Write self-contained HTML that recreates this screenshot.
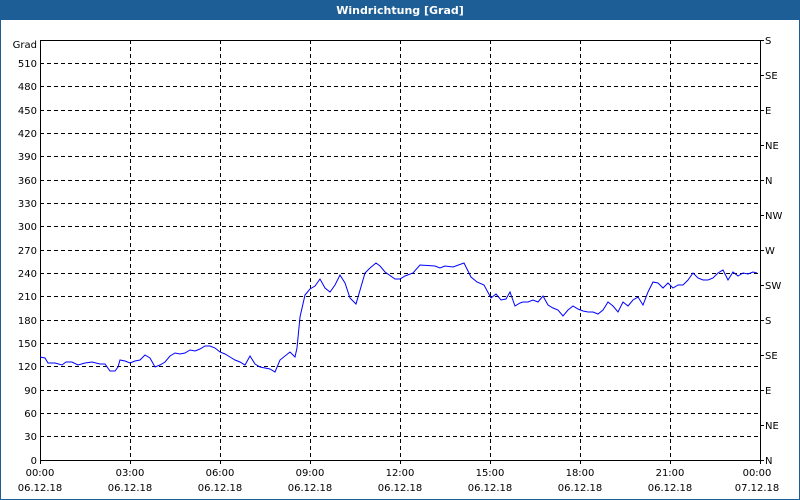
<!DOCTYPE html>
<html><head><style>
body{margin:0;width:800px;height:500px;overflow:hidden;background:#fff;font-family:"DejaVu Sans","Liberation Sans",sans-serif}
</style></head><body>
<svg width="800" height="500" xmlns="http://www.w3.org/2000/svg" style="display:block">
<rect x="0" y="0" width="800" height="500" fill="#fff"/>
<rect x="0" y="0" width="800" height="20" fill="#1d5e96"/>
<rect x="0.5" y="0.5" width="799" height="499" fill="none" stroke="#1d5e96"/>
<text x="400" y="14" fill="#fff" font-size="11" font-weight="bold" text-anchor="middle" font-family="DejaVu Sans, Liberation Sans, sans-serif">Windrichtung [Grad]</text>
<g stroke="#000" stroke-dasharray="4,3" stroke-width="1">
<line x1="40" y1="63.5" x2="760" y2="63.5"/><line x1="40" y1="86.5" x2="760" y2="86.5"/><line x1="40" y1="110.5" x2="760" y2="110.5"/><line x1="40" y1="133.5" x2="760" y2="133.5"/><line x1="40" y1="156.5" x2="760" y2="156.5"/><line x1="40" y1="180.5" x2="760" y2="180.5"/><line x1="40" y1="203.5" x2="760" y2="203.5"/><line x1="40" y1="226.5" x2="760" y2="226.5"/><line x1="40" y1="250.5" x2="760" y2="250.5"/><line x1="40" y1="273.5" x2="760" y2="273.5"/><line x1="40" y1="296.5" x2="760" y2="296.5"/><line x1="40" y1="320.5" x2="760" y2="320.5"/><line x1="40" y1="343.5" x2="760" y2="343.5"/><line x1="40" y1="366.5" x2="760" y2="366.5"/><line x1="40" y1="390.5" x2="760" y2="390.5"/><line x1="40" y1="413.5" x2="760" y2="413.5"/><line x1="40" y1="436.5" x2="760" y2="436.5"/>
<line x1="130.5" y1="40" x2="130.5" y2="460"/><line x1="220.5" y1="40" x2="220.5" y2="460"/><line x1="310.5" y1="40" x2="310.5" y2="460"/><line x1="400.5" y1="40" x2="400.5" y2="460"/><line x1="490.5" y1="40" x2="490.5" y2="460"/><line x1="580.5" y1="40" x2="580.5" y2="460"/><line x1="670.5" y1="40" x2="670.5" y2="460"/>
</g>
<rect x="40.5" y="40.5" width="720" height="420" fill="none" stroke="#000"/>
<g stroke="#000">
<line x1="130.5" y1="460" x2="130.5" y2="464"/><line x1="220.5" y1="460" x2="220.5" y2="464"/><line x1="310.5" y1="460" x2="310.5" y2="464"/><line x1="400.5" y1="460" x2="400.5" y2="464"/><line x1="490.5" y1="460" x2="490.5" y2="464"/><line x1="580.5" y1="460" x2="580.5" y2="464"/><line x1="670.5" y1="460" x2="670.5" y2="464"/><line x1="760.5" y1="460" x2="760.5" y2="464"/><line x1="40.5" y1="460" x2="40.5" y2="464"/>
<line x1="760" y1="40.5" x2="764" y2="40.5"/><line x1="760" y1="75.5" x2="764" y2="75.5"/><line x1="760" y1="110.5" x2="764" y2="110.5"/><line x1="760" y1="145.5" x2="764" y2="145.5"/><line x1="760" y1="180.5" x2="764" y2="180.5"/><line x1="760" y1="215.5" x2="764" y2="215.5"/><line x1="760" y1="250.5" x2="764" y2="250.5"/><line x1="760" y1="285.5" x2="764" y2="285.5"/><line x1="760" y1="320.5" x2="764" y2="320.5"/><line x1="760" y1="355.5" x2="764" y2="355.5"/><line x1="760" y1="390.5" x2="764" y2="390.5"/><line x1="760" y1="425.5" x2="764" y2="425.5"/><line x1="760" y1="460.5" x2="764" y2="460.5"/>
</g>
<g font-size="10" fill="#000" text-anchor="end">
<text x="37" y="48">Grad</text>
<text x="37" y="67">510</text><text x="37" y="90">480</text><text x="37" y="114">450</text><text x="37" y="137">420</text><text x="37" y="160">390</text><text x="37" y="184">360</text><text x="37" y="207">330</text><text x="37" y="230">300</text><text x="37" y="254">270</text><text x="37" y="277">240</text><text x="37" y="300">210</text><text x="37" y="324">180</text><text x="37" y="347">150</text><text x="37" y="370">120</text><text x="37" y="394">90</text><text x="37" y="417">60</text><text x="37" y="440">30</text><text x="37" y="464">0</text>
</g>
<g font-size="10" fill="#000">
<text x="765" y="44">S</text><text x="765" y="79">SE</text><text x="765" y="114">E</text><text x="765" y="149">NE</text><text x="765" y="184">N</text><text x="765" y="219">NW</text><text x="765" y="254">W</text><text x="765" y="289">SW</text><text x="765" y="324">S</text><text x="765" y="359">SE</text><text x="765" y="394">E</text><text x="765" y="429">NE</text><text x="765" y="464">N</text>
</g>
<g font-size="10" fill="#000" text-anchor="middle">
<text x="40" y="476">00:00</text><text x="40" y="491">06.12.18</text>
<text x="130" y="476">03:00</text><text x="130" y="491">06.12.18</text>
<text x="220" y="476">06:00</text><text x="220" y="491">06.12.18</text>
<text x="310" y="476">09:00</text><text x="310" y="491">06.12.18</text>
<text x="400" y="476">12:00</text><text x="400" y="491">06.12.18</text>
<text x="490" y="476">15:00</text><text x="490" y="491">06.12.18</text>
<text x="580" y="476">18:00</text><text x="580" y="491">06.12.18</text>
<text x="670" y="476">21:00</text><text x="670" y="491">06.12.18</text>
<text x="757" y="476">00:00</text><text x="757" y="491">07.12.18</text>
</g>
<polyline fill="none" stroke="#0000ff" stroke-width="1" points="40,357 45,358 48,363 55,363 62,365 66,362 72,362 78,365 85,363 92,362 100,364 105,364 110,371 115,371 118,367 120,360 125,361 130,363 135,361 140,360 145,355 150,358 155,367 160,365 165,362 170,356 175,353 180,354 185,353 190,350 195,351 200,349 205,346 210,346 215,348 220,352 225,354 230,357 235,360 240,362 245,365 250,356 255,364 260,367 265,368 270,369 275,372 280,360 290,352 295,357 297,348 300,317 305,295 310,289 315,286 320,279 325,288 330,292 335,285 340,275 345,283 350,298 356,304 365,273 370,268 376,263 380,266 385,272 395,279 400,279 405,276 413,273 420,265 435,266 440,268 445,266 453,267 464,263 471,277 477,282 484,285 491,298 496,294 501,300 506,299 510,292 515,306 520,303 523,302 528,302 533,300 538,302 543,296 548,305 553,308 558,310 563,316 568,310 573,306 578,309 583,311 588,312 593,312 598,314 603,310 608,302 613,306 618,312 623,302 628,306 633,300 638,297 643,305 648,292 653,282 658,283 663,288 668,283 673,288 678,285 683,285 688,280 693,273 698,278 703,280 708,280 713,278 718,273 723,270 728,280 733,272 738,276 743,273 748,274 753,272 757,273"/>
</svg>
</body></html>
